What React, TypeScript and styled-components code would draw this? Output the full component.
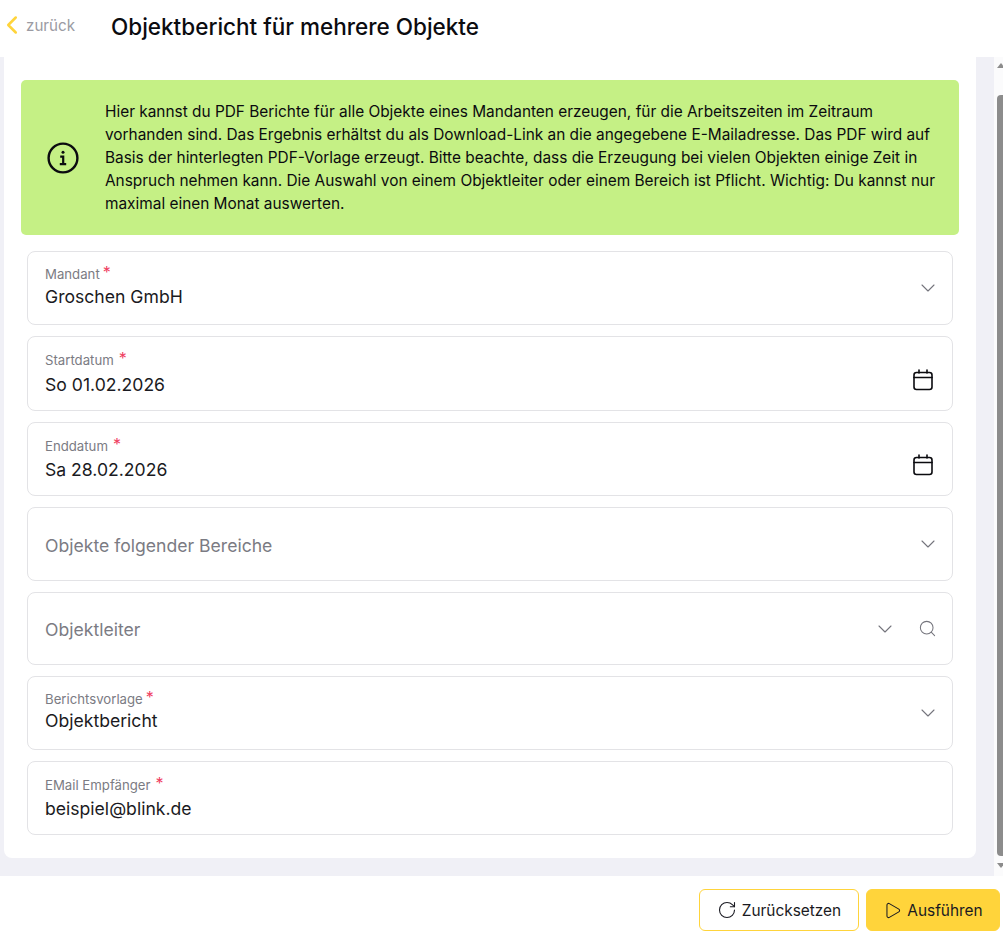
import styled, { createGlobalStyle } from "styled-components";
import { ChevronDown, ChevronLeft, Play, RotateCw, Search } from "lucide-react";

const GlobalStyle = createGlobalStyle`
  html, body {
    margin: 0;
    padding: 0;
    height: 100%;
    overflow: hidden;
    background: #ffffff;
    font-family: Inter, "Liberation Sans", sans-serif;
  }
  * {
    box-sizing: border-box;
  }
`;

const Page = styled.div`
  display: flex;
  flex-direction: column;
  width: 1003px;
  height: 936px;
`;

const TopBar = styled.header`
  display: flex;
  align-items: center;
  height: 57px;
  padding: 0 0 4px 0;
  flex: none;
`;

const BackLink = styled.a`
  display: flex;
  align-items: center;
  width: 111px;
  font-size: 15.2px;
  color: #9b9ba3;
  margin-top: -3px;
`;

const BackIcon = styled(ChevronLeft)`
  flex: none;
  margin: 0 -1px 0 -3px;
  color: #ffd43b;
`;

const Title = styled.h1`
  margin: 0;
  font-size: 22.5px;
  font-weight: 450;
  color: #0b0b0f;
`;

const Body = styled.div`
  display: flex;
  height: 819px;
  flex: none;
  padding-left: 4px;
  background: #f0f0f6;
`;

const Content = styled.main`
  width: 972px;
  height: 801px;
  padding: 23px 17px 0;
  background: #ffffff;
  border-radius: 0 0 8px 8px;
`;

const Notice = styled.div`
  display: flex;
  align-items: center;
  width: 938px;
  height: 155px;
  padding: 0 16px 0 26px;
  gap: 26px;
  background: #c5f085;
  border-radius: 5px;
  font-size: 15.4px;
  line-height: 23px;
  color: #0b0b0f;
`;

const NoticeIcon = styled.svg`
  flex: none;
  width: 32px;
  height: 32px;
`;

const NoticeText = styled.p`
  margin: 0;
`;

const Fields = styled.div`
  display: flex;
  flex-direction: column;
  gap: 11px;
  width: 926px;
  margin: 16px 0 0 6px;
`;

const Field = styled.div<{ $height?: number }>`
  display: flex;
  align-items: center;
  height: ${({ $height }) => $height ?? 74}px;
  padding: 0 17px;
  border: 1px solid #e3e3e6;
  border-radius: 8px;
  background: #ffffff;
`;

const FieldMain = styled.div<{ $top: number }>`
  flex: 1;
  min-width: 0;
  align-self: flex-start;
  padding-top: ${({ $top }) => $top}px;
`;

const Label = styled.div`
  font-size: 13.2px;
  line-height: 16px;
  color: #7b7b83;
`;

const Required = styled.span<{ $gap?: number }>`
  margin-left: ${({ $gap }) => $gap ?? 3}px;
  color: #ef3e5f;
  font-size: 16px;
  line-height: 0;
  vertical-align: 1px;
`;

const Value = styled.div<{ $gap?: number }>`
  margin-top: ${({ $gap }) => $gap ?? 3}px;
  font-size: 17.6px;
  line-height: 24px;
  color: #1a1a22;
`;

const Placeholder = styled.div`
  font-size: 17.6px;
  line-height: 24px;
  color: #7b7b83;
`;

const FieldIcons = styled.div`
  display: flex;
  flex: none;
  align-items: center;
  gap: 21px;
  margin-right: -2px;
  color: #74747c;
`;

const ChevronIcon = styled(ChevronDown)<{ $pull?: boolean }>`
  flex: none;
  margin-right: ${({ $pull }) => ($pull ? "-2.5px" : "0")};
`;

const CalendarIcon = styled.svg`
  flex: none;
  width: 22px;
  height: 22px;
  margin: 12px 3px 0 0;
  color: #0b0b0f;
`;

const ScrollTrack = styled.div`
  position: relative;
  width: 9px;
  margin-left: 18px;
  background: #fbfbfc;
`;

const ScrollArrow = styled.div<{ $down?: boolean }>`
  position: absolute;
  left: 3px;
  ${({ $down }) => ($down ? "bottom: 8px;" : "top: 6px;")}
  width: 0;
  height: 0;
  border-left: 4px solid transparent;
  border-right: 4px solid transparent;
  ${({ $down }) => ($down ? "border-top" : "border-bottom")}: 5px solid #8c8c8c;
`;

const ScrollThumb = styled.div`
  position: absolute;
  top: 38px;
  left: 3px;
  right: 0;
  bottom: 20px;
  background: #8c8c8c;
  border-radius: 4px 0 0 4px;
`;

const Footer = styled.footer`
  display: flex;
  justify-content: flex-end;
  align-items: flex-start;
  gap: 7px;
  flex: 1;
  padding: 13px 3px 0 0;
`;

const Button = styled.button<{ $primary?: boolean }>`
  display: flex;
  align-items: center;
  justify-content: center;
  gap: 5px;
  height: 42px;
  width: ${({ $primary }) => ($primary ? 134 : 160)}px;
  border: 1px solid #ffd43b;
  border-radius: 6px;
  background: ${({ $primary }) => ($primary ? "#ffd43b" : "#ffffff")};
  font-family: inherit;
  font-size: 15.4px;
  color: #1a1a22;
`;

const Calendar = () => (
  <CalendarIcon viewBox="0 0 22 22" fill="none" stroke="currentColor" strokeWidth="1.6" strokeLinecap="round">
    <rect x="2" y="3.5" width="18" height="17" rx="2.5" />
    <path d="M2 8.5h18M7 1v3M15 1v3" />
  </CalendarIcon>
);

const App = () => (
  <Page>
    <GlobalStyle />
    <TopBar>
      <BackLink>
        <BackIcon size={30} strokeWidth={2} />
        zurück
      </BackLink>
      <Title>Objektbericht für mehrere Objekte</Title>
    </TopBar>
    <Body>
      <Content>
        <Notice>
          <NoticeIcon viewBox="0 0 32 32" fill="none" stroke="currentColor">
            <circle cx="16" cy="16" r="14.4" strokeWidth="2.4" />
            <circle cx="16" cy="10.2" r="1.5" fill="currentColor" stroke="none" />
            <path d="M13.2 14.6h3v7.4M12.8 22.2h6.4" strokeWidth="2.2" />
          </NoticeIcon>
          <NoticeText>
            Hier kannst du PDF Berichte für alle Objekte eines Mandanten erzeugen, für die Arbeitszeiten im Zeitraum
            vorhanden sind. Das Ergebnis erhältst du als Download-Link an die angegebene E-Mailadresse. Das PDF wird auf
            Basis der hinterlegten PDF-Vorlage erzeugt. Bitte beachte, dass die Erzeugung bei vielen Objekten einige Zeit in
            Anspruch nehmen kann. Die Auswahl von einem Objektleiter oder einem Bereich ist Pflicht. Wichtig: Du kannst nur
            maximal einen Monat auswerten.
          </NoticeText>
        </Notice>
        <Fields>
          <Field>
            <FieldMain $top={14}>
              <Label>
                Mandant<Required>*</Required>
              </Label>
              <Value>Groschen GmbH</Value>
            </FieldMain>
            <FieldIcons>
              <ChevronIcon $pull size={24} strokeWidth={1.1} />
            </FieldIcons>
          </Field>
          <Field $height={75}>
            <FieldMain $top={15}>
              <Label>
                Startdatum<Required $gap={5}>*</Required>
              </Label>
              <Value $gap={5}>So 01.02.2026</Value>
            </FieldMain>
            <FieldIcons>
              <Calendar />
            </FieldIcons>
          </Field>
          <Field>
            <FieldMain $top={15}>
              <Label>
                Enddatum<Required $gap={5}>*</Required>
              </Label>
              <Value $gap={4}>Sa 28.02.2026</Value>
            </FieldMain>
            <FieldIcons>
              <Calendar />
            </FieldIcons>
          </Field>
          <Field>
            <FieldMain $top={26}>
              <Placeholder>Objekte folgender Bereiche</Placeholder>
            </FieldMain>
            <FieldIcons>
              <ChevronIcon $pull size={24} strokeWidth={1.1} />
            </FieldIcons>
          </Field>
          <Field $height={73}>
            <FieldMain $top={25}>
              <Placeholder>Objektleiter</Placeholder>
            </FieldMain>
            <FieldIcons>
              <ChevronIcon size={24} strokeWidth={1.1} />
              <Search size={19} strokeWidth={1.3} />
            </FieldIcons>
          </Field>
          <Field>
            <FieldMain $top={14}>
              <Label>
                Berichtsvorlage<Required>*</Required>
              </Label>
              <Value $gap={2}>Objektbericht</Value>
            </FieldMain>
            <FieldIcons>
              <ChevronIcon $pull size={24} strokeWidth={1.1} />
            </FieldIcons>
          </Field>
          <Field>
            <FieldMain $top={15}>
              <Label>
                EMail Empfänger<Required $gap={5}>*</Required>
              </Label>
              <Value $gap={4}>beispiel@blink.de</Value>
            </FieldMain>
          </Field>
        </Fields>
      </Content>
      <ScrollTrack>
        <ScrollArrow />
        <ScrollThumb />
        <ScrollArrow $down />
      </ScrollTrack>
    </Body>
    <Footer>
      <Button>
        <RotateCw size={20} strokeWidth={1.3} />
        Zurücksetzen
      </Button>
      <Button $primary>
        <Play size={19} strokeWidth={1.3} />
        Ausführen
      </Button>
    </Footer>
  </Page>
);

export default App;
